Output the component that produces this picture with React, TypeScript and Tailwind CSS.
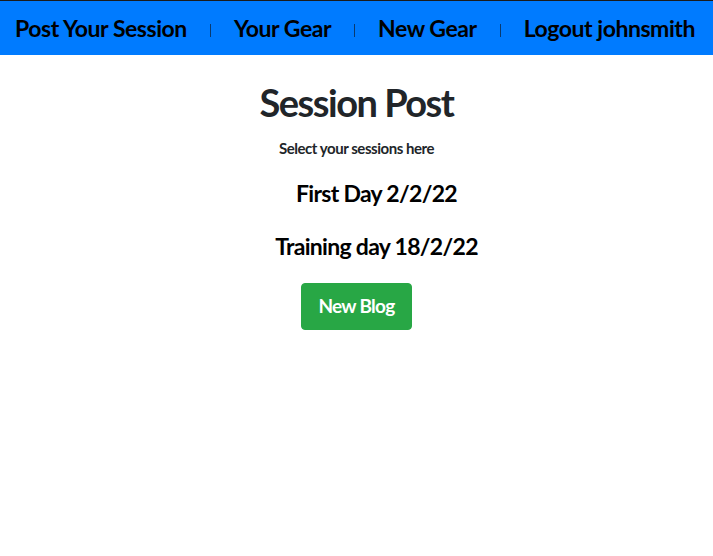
import React from 'react';

const navItems = ['Post Your Session', 'Your Gear', 'New Gear', 'Logout johnsmith'];
const sessions = ['First Day 2/2/22', 'Training day 18/2/22'];

export default function App() {
  return (
    <div className="min-h-[556px] bg-white text-[#212529]" style={{ fontFamily: 'Lato, "Open Sans", sans-serif' }}>
      {/* Navbar */}
      <nav className="h-[55px] border-t border-[#1b1b1b] bg-[#007bff] flex items-center pl-[15px] whitespace-nowrap">
        {navItems.map((item, i) => (
          <React.Fragment key={item}>
            {i > 0 && <span className="mx-[23px] h-[13px] w-px bg-[#0a3a6e] mt-[4px] shrink-0" />}
            <a className="text-[23px] tracking-[-0.45px] font-bold text-black leading-none">{item}</a>
          </React.Fragment>
        ))}
      </nav>

      {/* Content */}
      <div className="text-center">
        <h1 className="mt-[23px] text-[38px] tracking-[-1.5px] font-bold leading-[48px] text-[#212529]">Session Post</h1>
        <p className="mt-[13px] text-[15px] tracking-[-0.45px] font-bold leading-[18px] text-[#212529]">Select your sessions here</p>
        <ul className="pl-10 mt-[22px] flex flex-col gap-[24px]">
          {sessions.map((s) => (
            <li key={s} className="text-[23px] tracking-[-0.7px] font-bold leading-[29px] text-black">{s}</li>
          ))}
        </ul>
        <button className="mt-[22px] h-[47px] px-[16px] border border-[#28a745] rounded-[4px] bg-[#28a745] text-white text-[19px] tracking-[-0.7px] font-bold">
          New Blog
        </button>
      </div>
    </div>
  );
}
